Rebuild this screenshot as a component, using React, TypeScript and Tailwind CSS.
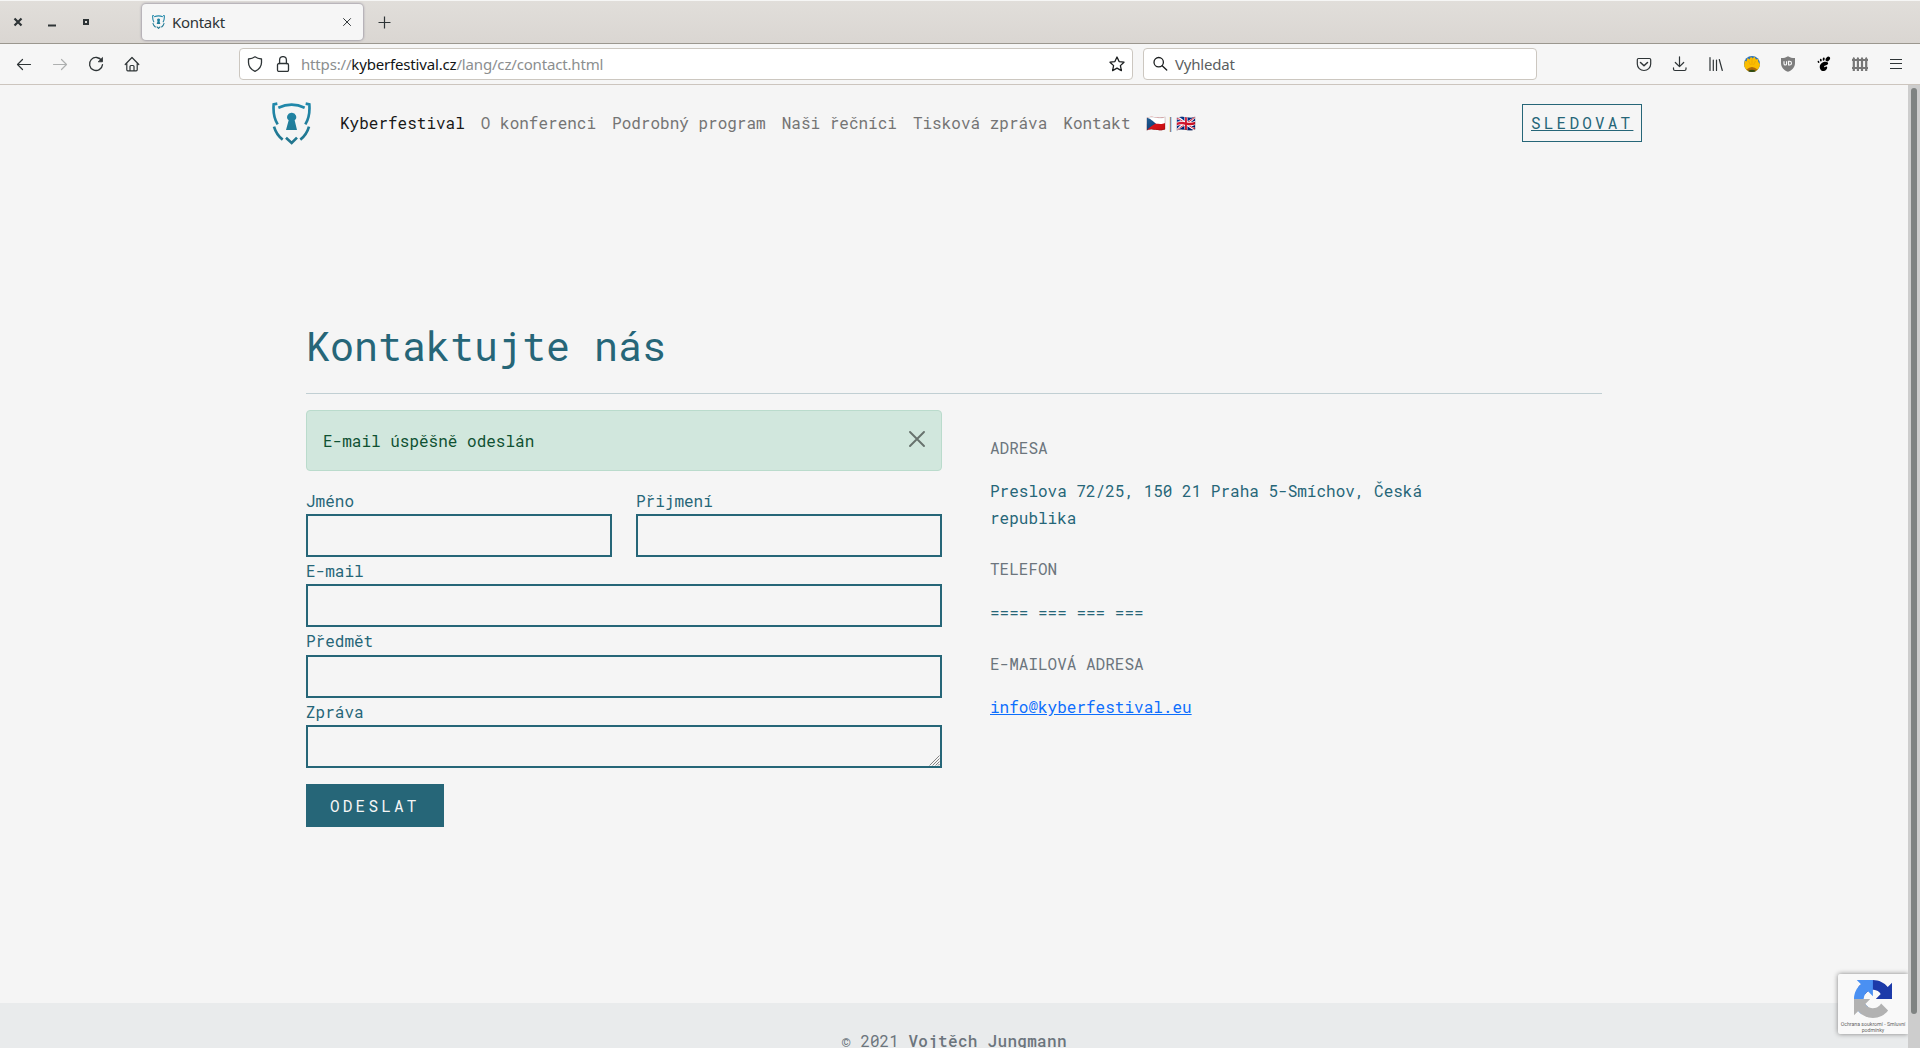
import type { ReactNode } from 'react';

function Icon({ children, size = 16, className = '' }: { children: ReactNode; size?: number; className?: string }) {
  return (
    <svg width={size} height={size} viewBox="0 0 16 16" fill="none" stroke="currentColor" strokeWidth="1.2" strokeLinecap="round" strokeLinejoin="round" className={`shrink-0 ${className}`}>
      {children}
    </svg>
  );
}

function Slot({ children }: { children: ReactNode }) {
  return <div className="flex h-9 w-9 items-center justify-center">{children}</div>;
}

function ShieldLogo({ width, height, stroke = 8 }: { width: number; height: number; stroke?: number }) {
  return (
    <svg width={width} height={height} viewBox="36 36 117 129" fill="none" strokeWidth={stroke} className="shrink-0">
      <defs>
        <linearGradient id="shield" x1="0" y1="36" x2="0" y2="165" gradientUnits="userSpaceOnUse">
          <stop offset="0" stopColor="#2089ac" />
          <stop offset="1" stopColor="#22748c" />
        </linearGradient>
      </defs>
      <g stroke="url(#shield)">
        <path d="M52 41 L41 43 C39 68 43 87 53 103" />
        <path d="M137 41 L148 43 C150 68 146 87 136 103" />
        <path d="M55 53 C80 42 110 42 134 53" />
        <path d="M42 110 C47 127 56 140 68 149" />
        <path d="M147 110 C142 127 133 140 121 149" />
        <path d="M78 143 L95 159 L111 143" />
      </g>
      <path d="M95 68 a13 13 0 0 1 9 23 L111 120 H78 L86 91 A13 13 0 0 1 95 68Z" fill="url(#shield)" />
    </svg>
  );
}

function TitleBar() {
  return (
    <div className="flex h-11 border-t border-b border-t-[#f6f6f5] border-b-[#9b978f] bg-gradient-to-b from-[#e1deda] to-[#dad6d2] text-[#2e3436]">
      <div className="flex h-[42px] w-[142px] items-center pl-3">
        <svg width="78" height="12" viewBox="0 0 78 12" fill="none" stroke="currentColor">
          <path d="M2.5 2.5l7 7m0-7l-7 7" strokeWidth="2.2" />
          <path d="M36 9.5h8" strokeWidth="2" />
          <path d="M72 4h4v4h-4z" strokeWidth="2" />
        </svg>
      </div>
      <div className="mt-[3px] flex h-9 w-[221px] items-center rounded-[4px] bg-[#f6f6f6] pl-[10px] pr-[10px] shadow-[0_0_2px_1px_rgba(120,115,135,0.5)]">
        <ShieldLogo width={13} height={14} stroke={10} />
        <span className="ml-[7px] flex-1 text-[15px] tracking-[-0.300px]">Kontakt</span>
        <svg width="12" height="12" viewBox="0 0 12 12" stroke="currentColor" strokeWidth="1">
          <path d="M2.300 2.300l7.500 7.500m0-7.500l-7.500 7.500" />
        </svg>
      </div>
      <div className="flex h-[42px] items-center pl-[15px]">
        <svg width="13" height="13" viewBox="0 0 13 13" stroke="currentColor" strokeWidth="1.2">
          <path d="M.5 6.500h12M6.500.5v12" />
        </svg>
      </div>
    </div>
  );
}

function ToolBar() {
  return (
    <div className="flex h-[41px] items-center border-b border-[#ccc5be] bg-[#f6f6f6] pl-[6px] text-[#2e3436]">
      <Slot><Icon><path d="M14.500 8.500H1.500M6.500 3.500l-5 5 5 5" /></Icon></Slot>
      <Slot><Icon className="text-[#aeb0b0]"><path d="M1.500 8.500h13M9.500 3.500l5 5-5 5" /></Icon></Slot>
      <Slot>
        <Icon>
          <path d="M13.700 4.800A6.500 6.500 0 1 0 14.500 8.600" strokeWidth="1.300" />
          <path d="M14.500 1.800v4h-4z" fill="currentColor" strokeWidth=".8" />
        </Icon>
      </Slot>
      <Slot>
        <Icon>
          <path d="M1.200 8.500L8 1.500l6.800 7M2.800 7.500v6.300q0 1 1 1h8.400q1 0 1-1V7.500" />
          <path d="M6 14.500v-4q0-1 1-1h2q1 0 1 1v4" />
        </Icon>
      </Slot>
      <div className="ml-[89px] flex h-8 w-[894px] items-center rounded-[4px] border border-[#ccc7c0] bg-white pl-[7px] pr-[7px]">
        <Icon><path d="M8 .8c2 1.500 4 2 6.500 2.200v3.500c0 4.500-2.500 7-6.500 8.800C4 13.500 1.500 11 1.500 6.500V3C4 2.800 6 2.300 8 .8z" strokeWidth="1.300" /></Icon>
        <Icon className="ml-[12px]">
          <rect x="2.500" y="7.500" width="11" height="8" rx="1.500" strokeWidth="1.300" />
          <path d="M4.600 7.500V4a3.400 3.400 0 0 1 6.800 0v3.500" strokeWidth="1.300" />
        </Icon>
        <div className="ml-[10px] flex-1 text-[15px] tracking-[-0.170px] text-[#8b8e8f]">
          https://<span className="text-[#111415]">kyberfestival.cz</span>/lang/cz/contact.html
        </div>
        <Icon className="text-[#1b1e1f]"><path d="M8 1l2.100 4.600 4.900.6-3.600 3.400 1 5L8 12.100l-4.400 2.500 1-5L1 6.200l4.900-.6z" strokeWidth="1.300" /></Icon>
      </div>
      <div className="ml-[10px] flex h-8 w-[394px] items-center gap-[7px] rounded-[4px] border border-[#ccc7c0] bg-white pl-2 text-[15px]">
        <Icon className="text-[#1b1e1f]"><circle cx="6.700" cy="6.200" r="4.700" strokeWidth="1.300" /><path d="M10.200 9.800l4.500 4.200" strokeWidth="1.400" /></Icon>
        <span className="tracking-[-0.200px] text-[#5b5e5f]">Vyhledat</span>
      </div>
      <div className="ml-[89px] flex">
        <Slot>
          <Icon><path d="M2.500 2.500h11q1.200 0 1.200 1.200V8a6.700 6.500 0 0 1-13.400 0V3.700q0-1.200 1.200-1.200z" /><path d="M4.500 6.500L8 9.800l3.500-3.300" strokeWidth="1.500" /></Icon>
        </Slot>
        <Slot>
          <Icon><path d="M7.500 .8v9.700M3.300 6.500l4.200 4.200 4.200-4.200M1.500 11.800v1.200q0 1.500 1.500 1.500h9.500q1.500 0 1.500-1.500v-1.200" /></Icon>
        </Slot>
        <Slot><Icon><path d="M2 1.500v13M5.300 4v10.500M8.500 4v10.500M11.300 3.500l3 11" /></Icon></Slot>
        <Slot>
          <svg width="16" height="16" viewBox="0 0 16 16">
            <circle cx="8" cy="8" r="8" fill="#2f73b8" />
            <path d="M.1 9.500L.8 4.500 2.500 5.500 3.500 2l2 1.500L7 .8l1.500 1.700L10.500.8 12 3.500l2-.5.300 3 1.700 2 -.2 1.500A8 8 0 0 1 .1 9.500z" fill="#fbbd00" />
            <path d="M8 3v6M4.500 5L6.500 9M11.500 5L9.500 9" stroke="#e39a00" strokeWidth=".5" />
            <path d="M2.500 13.500q5.500-5 11 0a8 8 0 0 1-11 0z" fill="#b06a08" />
            <path d="M4 14.900q4-2.500 8 0a8 8 0 0 1-8 0z" fill="#2e4b12" />
          </svg>
        </Slot>
        <Slot>
          <svg width="16" height="16" viewBox="0 0 16 16" fill="none">
            <path d="M8 .2C10 1.500 12 2 15 2v5c0 4.500-3 7.200-7 8.800C4 14.200 1 11.500 1 7V2c3 0 5-.5 7-1.800z" fill="#7d7d7d" />
            <path d="M4 5.300v2.400q0 1.300 1.300 1.300t1.300-1.300V5.300M8.600 5.300v3.700h1a1.850 1.850 0 0 0 0-3.700z" stroke="#fff" strokeWidth="1.100" />
          </svg>
        </Slot>
        <Slot>
          <svg width="16" height="16" viewBox="0 0 16 16" fill="#000">
            <ellipse cx="11.800" cy="3" rx="1.800" ry="2.700" transform="rotate(40 11.800 3)" />
            <ellipse cx="7.700" cy="3.200" rx="1" ry="1.600" transform="rotate(10 7.700 3.200)" />
            <ellipse cx="4.800" cy="4.200" rx=".9" ry="1.400" transform="rotate(-10 4.800 4.200)" />
            <ellipse cx="2.500" cy="5.900" rx=".8" ry="1.200" transform="rotate(-25 2.500 5.900)" />
            <path d="M11.500 6.300c1.700 1.200-.3 2.900-2 3.300-1.300.3-1.800 1.200-1 1.600.9.500 1-.8 2-.6 1.700.5.200 4.200-2.500 4.500C4.900 15.400 3.500 12.500 3.800 10.200c.4-3.200 5-5.500 7.700-3.900z" />
          </svg>
        </Slot>
        <Slot>
          <svg width="16" height="16" viewBox="0 0 16 16" fill="none" stroke="#777">
            <path d="M0 4h16M0 12h16" strokeWidth="1.800" />
            <path d="M1.800 2v13M5.900 2v13M10 2v13M14.200 2v13" strokeWidth="2.200" />
            <path d="M1.800 1v1M5.900 1v1M10 1v1M14.200 1v1" strokeWidth="1" />
          </svg>
        </Slot>
        <Slot>
          <svg width="12" height="12" viewBox="0 0 12 12" stroke="currentColor" strokeWidth="1.200">
            <path d="M0 1.500h12M0 5.500h12M0 10.500h12" />
          </svg>
        </Slot>
      </div>
    </div>
  );
}

const links = ['O konferenci', 'Podrobný program', 'Naši řečníci', 'Tisková zpráva', 'Kontakt'];

function SiteNav() {
  return (
    <nav className="flex h-[76px] items-center pl-[272px] pr-[266px]">
      <ShieldLogo width={39} height={43} />
      <div className="ml-[29px] flex flex-1 items-center gap-4 text-[#747474]">
        <span className="text-[#191919]">Kyberfestival</span>
        {links.map((l) => <span key={l}>{l}</span>)}
        <span className="-ml-px flex">
          <span className="w-5 whitespace-nowrap">🇨🇿</span>
          <span className="w-[10px] text-center">|</span>
          <span className="w-5 whitespace-nowrap">🇬🇧</span>
        </span>
      </div>
      <a className="flex h-[38px] w-[120px] items-center border border-[#266678] pl-2 text-[#266678]">
        <span className="tracking-[3.200px] underline">SLEDOVAT</span>
      </a>
    </nav>
  );
}

function Field({ label }: { label: string }) {
  return (
    <label className="block flex-1">
      <span className="block">{label}</span>
      <input className="block h-[43px] w-full border-2 border-[#266678] bg-transparent px-3 outline-none" />
    </label>
  );
}

function ContactForm() {
  return (
    <form className="w-[636px] text-[#266678]">
      <div className="mb-4 flex h-[61px] items-center justify-between rounded-[4px] border border-[#badbcc] bg-[#d1e7dd] px-4 text-[#0f5132]">
        <span>E-mail úspěšně odeslán</span>
        <svg width="16" height="16" viewBox="0 0 16 16" stroke="#000" strokeWidth="1.900" strokeLinecap="round" className="mb-1 opacity-50">
          <path d="M1 1l14 14M15 1L1 15" />
        </svg>
      </div>
      <div className="flex gap-6">
        <Field label="Jméno" />
        <Field label="Přijmení" />
      </div>
      <Field label="E-mail" />
      <Field label="Předmět" />
      <label className="block">Zpráva</label>
      <div className="relative">
        <textarea className="block h-[43px] w-full resize-none border-2 border-[#266678] bg-transparent outline-none" />
        <svg width="11" height="11" viewBox="0 0 11 11" stroke="#777" strokeWidth=".9" className="absolute right-[2px] bottom-[2px]">
          <path d="M.5 10.500l10-10M3.500 10.500l7-7M6.500 10.500l4-4M9 10.500l1.500-1.500" />
        </svg>
      </div>
      <button type="button" className="mt-4 block h-[43px] w-[138px] bg-[#266678] pl-6 text-left tracking-[3.200px] text-[#f5f5f5]">ODESLAT</button>
    </form>
  );
}

function ContactInfo() {
  return (
    <div className="ml-12 w-[454px] pt-6 text-[#266678]">
      <p className="mb-4 text-[#6c757d]">ADRESA</p>
      <p className="mb-[23.500px]">Preslova 72/25, 150 21 Praha 5-Smíchov, Česká republika</p>
      <p className="mb-4 text-[#6c757d]">TELEFON</p>
      <p className="mb-[24.500px]">==== === === ===</p>
      <p className="mb-4 text-[#6c757d]">E-MAILOVÁ ADRESA</p>
      <a className="text-[#0d6efd] underline">info@kyberfestival.eu</a>
    </div>
  );
}

function RecaptchaBadge() {
  return (
    <div className="absolute right-0 bottom-[14px] flex h-[60px] w-[70px] flex-col items-center rounded-l-[2px] bg-[#f9f9f9] pt-[6px] shadow-[0_0_5px_gray]">
      <svg width="38" height="38" viewBox="0 0 64 64">
        <path fill="#1c3aa9" d="M64 31.955l-.033-1.370V4.687l-7.160 7.160C50.948 4.674 42.033.093 32.050.093c-10.400 0-19.622 4.960-25.458 12.640l11.736 11.860a15.550 15.550 0 0 1 4.754-5.334c2.050-1.600 4.952-2.906 8.968-2.906.485 0 .86.057 1.135.163 4.976.393 9.288 3.140 11.828 7.124l-8.307 8.307L64 31.953" />
        <path fill="#4a90f2" d="M31.862.094l-1.370.033H4.594l7.160 7.160C4.580 13.147 0 22.060 0 32.046c0 10.400 4.960 19.622 12.640 25.458L24.500 45.768a15.550 15.550 0 0 1-5.334-4.754c-1.600-2.050-2.906-4.952-2.906-8.968 0-.485.057-.86.163-1.135.393-4.976 3.140-9.288 7.124-11.828l8.307 8.307L31.860.095" />
        <path fill="#b2b2b2" d="M.001 32.045l.033 1.370v25.898l7.160-7.160c5.860 7.173 14.774 11.754 24.760 11.754 10.400 0 19.622-4.960 25.458-12.640l-11.736-11.860a15.550 15.550 0 0 1-4.754 5.334c-2.050 1.600-4.952 2.906-8.968 2.906-.485 0-.86-.057-1.135-.163-4.976-.393-9.288-3.140-11.828-7.124l8.307-8.307c-10.522.04-22.400.066-27.295-.005" />
      </svg>
      <p className="mt-[3px] text-center font-['Roboto'] text-[5.200px] leading-[6px] whitespace-nowrap text-[#666]">
        Ochrana soukromí - Smluvní<br />podmínky
      </p>
    </div>
  );
}

export default function App() {
  return (
    <div className="flex h-[1048px] w-full flex-col overflow-hidden font-['Noto_Sans',sans-serif]">
      <TitleBar />
      <ToolBar />
      <div className="flex min-h-0 flex-1">
        <div className="relative flex flex-1 flex-col overflow-hidden bg-[#f5f5f5] font-['Roboto_Mono','Liberation_Mono',monospace] text-base leading-[27.200px]">
          <SiteNav />
          <main className="flex-1 px-[306px] pt-[161px]">
            <h1 className="mb-[23px] text-[40px] leading-[48px] text-[#266678]">Kontaktujte nás</h1>
            <hr className="mb-4 border-[#c1cfd3]" />
            <div className="flex items-start">
              <ContactForm />
              <ContactInfo />
            </div>
          </main>
          <footer className="h-[45px] shrink-0 overflow-hidden bg-[#e9ebec] pt-6 text-center text-[#6c757d]">
            © 2021 <span className="font-medium tracking-[0.300px]">Vojtěch Jungmann</span>
          </footer>
          <RecaptchaBadge />
        </div>
        <div className="flex w-3 justify-center bg-[#cdcdcd] pt-[3px]">
          <div className="h-[926px] w-[6px] rounded-full bg-[#7f8382]" />
        </div>
      </div>
    </div>
  );
}
